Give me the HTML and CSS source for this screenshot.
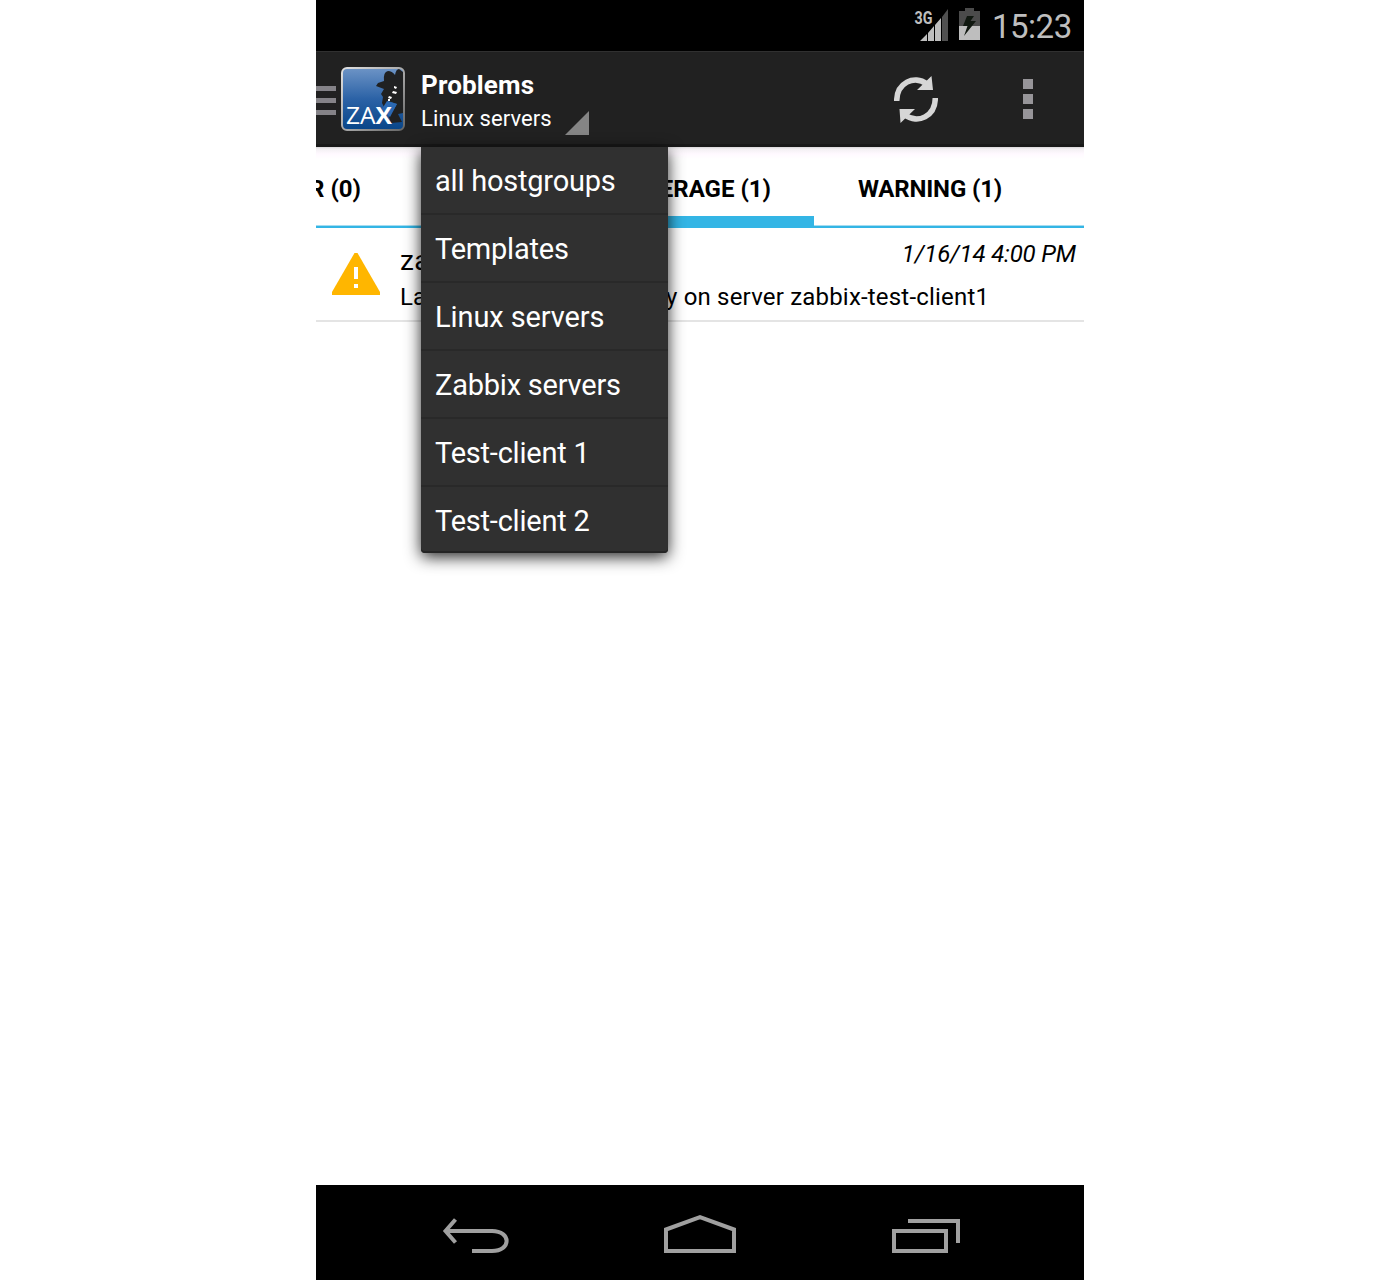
FILE: index.html
```html
<!DOCTYPE html>
<html lang="en">
<head>
<meta charset="utf-8">
<title>Problems</title>
<link rel="stylesheet" href="styles.css">
</head>
<body>
<main class="phone">
  <div class="status">
    <svg class="signal" width="34" height="34" viewBox="0 0 34 34">
      <text class="network" x="0.500" y="16" textLength="18" lengthAdjust="spacingAndGlyphs">3G</text>
      <path fill="#bebebe" d="M6 33L13 26V33ZM14 33V25L20 18V33ZM21 33V17L27 10V33Z"/>
      <path fill="#505050" d="M28 33V9L34 1V33Z"/>
    </svg>
    <svg class="battery" width="21" height="32" viewBox="0 0 21 32">
      <path fill="#4b4b4b" d="M6 0H15V3H21V18H0V3H6Z"/>
      <path fill="#bebebe" d="M0 18H21V32H0Z"/>
      <path fill="#101810" d="M8 8H15L11.500 13H17L5 28L8.500 18H4Z"/>
    </svg>
    <span class="clock">15:23</span>
  </div>
  <header class="bar">
    <div class="drawer"><i></i><i></i><i></i></div>
    <svg class="logo" width="64" height="64" viewBox="0 0 64 64">
      <defs>
        <linearGradient id="blue" x1="0" y1="0" x2="0" y2="1">
          <stop offset="0" stop-color="#6d94c6"/><stop offset=".5" stop-color="#2b62a6"/><stop offset="1" stop-color="#084588"/>
        </linearGradient>
        <linearGradient id="rim" x1="0" y1="0" x2="1" y2="1">
          <stop offset="0" stop-color="#e0e0e0"/><stop offset=".5" stop-color="#aaa"/><stop offset="1" stop-color="#666"/>
        </linearGradient>
      </defs>
      <rect x="1" y="1" width="62" height="62" rx="5" fill="url(#blue)" stroke="url(#rim)" stroke-width="2"/>
      <path fill="#202122" d="M43 14Q42 5 47 4Q51 4 54 8Q55 2 58 2L62 5V46L57 47L61 55L50 56L48 50L56 37L47 34L43 40L41 36L42 30L40 27L43 22L35 19L37 16Z"/>
      <path fill="#2b68b2" d="M46 34L56 37L49 50L41 42Z"/>
      <path fill="#fff" d="M53 19l3 1-1 2-2-1zM52 24l4 1-1 2-4-1zM48 29l3 1-1 2-3-1zM47 32h2v2h-2z"/>
      <text class="logo-text" x="5" y="57" textLength="46" lengthAdjust="spacingAndGlyphs">ZA<tspan class="logo-x">X</tspan></text>
    </svg>
    <div class="heading">
      <h1>Problems</h1>
      <p>Linux servers</p>
    </div>
    <svg class="spinner" width="24" height="24" viewBox="0 0 24 24"><path fill="#858585" d="M24 0V24H0Z"/></svg>
    <svg class="refresh" width="44" height="50" viewBox="0 0 44 50">
      <g fill="none" stroke="#d6d6d6" stroke-width="5.500">
        <path d="M2.700 26C2.700 8 20 -.5 33 9"/><path d="M41.300 23C41.300 41 24 49.500 11 40"/>
      </g>
      <path fill="#d6d6d6" d="M37.500 1L39 15H23ZM6.500 48L5.500 34H21Z"/>
    </svg>
    <div class="overflow"><i></i><i></i><i></i></div>
  </header>
  <nav class="tabs">
    <span class="tab">DISASTER (0)</span><span class="tab high">HIGH (0)</span><span class="tab average">AVERAGE (1)</span><span class="tab warning">WARNING (1)</span>
  </nav>
  <section class="problem">
    <svg class="alert" width="48" height="42" viewBox="0 0 48 42"><path fill="#ffb600" d="M22.500 0H25.500L48 39V42H0V39Z"/><path fill="#fff" d="M22 14H26V26H22ZM22 31H26V35H22Z"/></svg>
    <div class="detail">
      <div class="line"><span class="host">zabbix-test-client1</span><time>1/16/14 4:00 PM</time></div>
      <p class="message">Lack of available memory on server zabbix-test-client1</p>
    </div>
  </section>
  <ul class="menu">
    <li>all hostgroups</li><li>Templates</li><li>Linux servers</li><li>Zabbix servers</li><li>Test-client 1</li><li>Test-client 2</li>
  </ul>
  <footer class="navbar">
    <svg width="68" height="38" viewBox="0 0 68 38"><path d="M13.500 4.500L3.500 16L13.500 27.500M3 16H50C69.500 16 69.500 36 50 36H30"/></svg>
    <svg width="72" height="38" viewBox="0 0 72 38"><path d="M2 36V14.500L36 2.200L70 14.500V36Z"/></svg>
    <svg width="68" height="38" viewBox="0 0 68 38"><path d="M2 16H54V36H2ZM16 6H66V28"/></svg>
  </footer>
</main>
</body>
</html>
```

FILE: styles.css
```css
* { box-sizing: border-box; }
body { margin: 0; background: #fff; font-family: Roboto, sans-serif; }
h1, p, ul { margin: 0; padding: 0; font-weight: 400; }
svg { display: block; flex: none; }
.phone { position: relative; width: 768px; height: 1280px; margin: 0 auto; display: flex; flex-direction: column; overflow: hidden; }
.status { height: 51px; background: #000; display: flex; justify-content: flex-end; padding: 8px 12px 0 0; color: #bebebe; }
.network { font: 700 18px Roboto, sans-serif; fill: #bebebe; }
.battery { margin: 0 12px 0 11px; }
.clock { font-size: 33px; line-height: 38px; width: 80px; white-space: nowrap; letter-spacing: -.5px; }
.bar { height: 96px; background: #212121; border-top: 1px solid #303030; border-bottom: 3px solid #191919; display: flex; }
.drawer { width: 20px; margin: 34px 5px 0 0; }
.drawer i { display: block; height: 5px; margin-bottom: 7px; background: #858388; }
.logo { margin-top: 15px; }
.logo-text { font: 400 24px "Open Sans", sans-serif; fill: #fff; }
.logo-x { font-weight: 700; }
.heading { margin-left: 16px; width: 144px; color: #fff; white-space: nowrap; }
.heading h1 { font-size: 26px; line-height: 30px; font-weight: 700; margin-top: 18px; letter-spacing: .15px; }
.heading p { font-size: 22px; line-height: 26px; margin-top: 6px; letter-spacing: .1px; }
.spinner { margin-top: 59px; }
.refresh { margin: 23px 0 0 305px; }
.overflow { margin: 27px 0 0 85px; width: 10px; }
.overflow i { display: block; height: 10px; background: #979599; margin-bottom: 5px; }
.tabs { height: 81px; display: flex; justify-content: flex-end; padding-right: 38px; overflow: hidden; background: linear-gradient(#d8d6d8 0, #f3f0f3 2px, #fff9ff 7px, #fff 12px); box-shadow: inset 0 -2px #33b5e5, inset 0 -3px #a5dcf0; }
.tab { flex: none; text-align: center; font-size: 24px; font-weight: 700; line-height: 84px; white-space: nowrap; padding: 0 43px; }
.high { width: 182px; }
.average { width: 228px; border-bottom: 12px solid #33b5e5; padding: 0; }
.warning { width: 232px; padding: 0; letter-spacing: -.15px; }
.problem { height: 94px; border-bottom: 2px solid #e4e4e4; display: flex; padding: 0 8px 0 16px; }
.alert { margin-top: 25px; }
.detail { flex: 1; margin-left: 20px; }
.line { display: flex; justify-content: space-between; height: 54px; }
.host { font-size: 28px; line-height: 66px; letter-spacing: .4px; }
time { font-size: 24px; line-height: 52px; font-style: italic; letter-spacing: -.15px; }
.message { font-size: 24px; line-height: 30px; white-space: nowrap; letter-spacing: .19px; }
.menu { position: absolute; left: 105px; top: 147px; width: 247px; height: 406px; list-style: none; background: #303030; color: #fff; border-radius: 0 0 4px 4px; box-shadow: 0 4px 16px rgba(0,0,0,.85), inset 0 -2px #242424; }
.menu li { height: 68px; padding-left: 14px; font-size: 29px; line-height: 69px; letter-spacing: -.22px; border-bottom: 2px solid #292929; white-space: nowrap; }
.menu li:nth-child(3) { letter-spacing: -.1px; }
.menu li:last-child { border: 0; }
.navbar { height: 95px; margin-top: auto; background: #000; display: flex; justify-content: space-between; padding: 30px 124px 0 126px; }
.navbar svg:nth-child(2) { margin-left: -2px; }
.navbar path { fill: none; stroke: #a0a0a0; stroke-width: 4; }
```
